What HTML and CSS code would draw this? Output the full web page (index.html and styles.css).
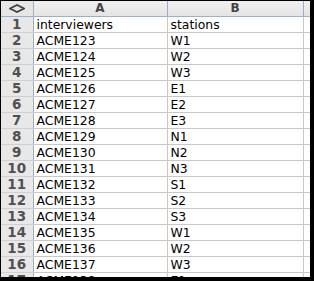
FILE: index.html
```html
<!DOCTYPE html>
<html>
<head>
<meta charset="utf-8">
<link rel="stylesheet" href="styles.css">
</head>
<body>
<div class="frame">
<table class="sheet">
<colgroup><col class="c-rh"><col class="c-a"><col class="c-b"><col class="c-x"></colgroup>
<thead>
<tr><th class="corner"><svg width="16" height="9" viewBox="0 0 16 9"><polygon points="1,4.5 8,1 15,4.5 8,8" fill="none" stroke="#404040" stroke-width="1.6"/></svg></th><th>A</th><th>B</th><th></th></tr>
</thead>
<tbody>
<tr><th>1</th><td>interviewers</td><td>stations</td><td></td></tr>
<tr><th>2</th><td>ACME123</td><td>W1</td><td></td></tr>
<tr><th>3</th><td>ACME124</td><td>W2</td><td></td></tr>
<tr><th>4</th><td>ACME125</td><td>W3</td><td></td></tr>
<tr><th>5</th><td>ACME126</td><td>E1</td><td></td></tr>
<tr><th>6</th><td>ACME127</td><td>E2</td><td></td></tr>
<tr><th>7</th><td>ACME128</td><td>E3</td><td></td></tr>
<tr><th>8</th><td>ACME129</td><td>N1</td><td></td></tr>
<tr><th>9</th><td>ACME130</td><td>N2</td><td></td></tr>
<tr><th>10</th><td>ACME131</td><td>N3</td><td></td></tr>
<tr><th>11</th><td>ACME132</td><td>S1</td><td></td></tr>
<tr><th>12</th><td>ACME133</td><td>S2</td><td></td></tr>
<tr><th>13</th><td>ACME134</td><td>S3</td><td></td></tr>
<tr><th>14</th><td>ACME135</td><td>W1</td><td></td></tr>
<tr><th>15</th><td>ACME136</td><td>W2</td><td></td></tr>
<tr><th>16</th><td>ACME137</td><td>W3</td><td></td></tr>
<tr><th>17</th><td>ACME138</td><td>E1</td><td></td></tr>
</tbody>
</table>
</div>
</body>
</html>
```
FILE: styles.css
```css
html, body {
  margin: 0;
  padding: 0;
  background: #000;
}
body {
  padding: 1px 0 0 1px;
}
.frame {
  width: 309px;
  height: 276px;
  overflow: hidden;
  background: #fff;
}
.sheet {
  border-collapse: collapse;
  table-layout: fixed;
  width: 320px;
  font-family: "DejaVu Sans", Verdana, sans-serif;
  font-size: 12.4px;
  color: #000;
}
.c-rh { width: 32px; }
.c-a { width: 134px; }
.c-b { width: 136px; }
.c-x { width: 18px; }
.sheet thead th {
  height: 15px;
  padding: 0;
  background: linear-gradient(#f0f0f0, #e4e4e4);
  border-right: 1px solid #9fb0c0;
  border-bottom: 1px solid #9fb0c0;
  font-size: 12px;
  font-weight: bold;
  color: #444;
  text-align: center;
  line-height: 15px;
}
.sheet thead th.corner {
  background: #e6e6e6;
}
.corner svg { display: block; margin: 0 auto; }
.sheet tbody th {
  height: 15px;
  padding: 0;
  background: #e8e8e8;
  border-right: 1px solid #a0b0bf;
  border-bottom: 1px solid #d0d0d0;
  font-weight: bold;
  font-size: 13.5px;
  color: #505050;
  text-align: center;
  line-height: 15px;
}
.sheet td {
  height: 15px;
  padding: 0 0 0 3px;
  border-right: 1px solid #c8c8c8;
  border-bottom: 1px solid #c8c8c8;
  line-height: 15px;
  white-space: nowrap;
  overflow: hidden;
}
```
